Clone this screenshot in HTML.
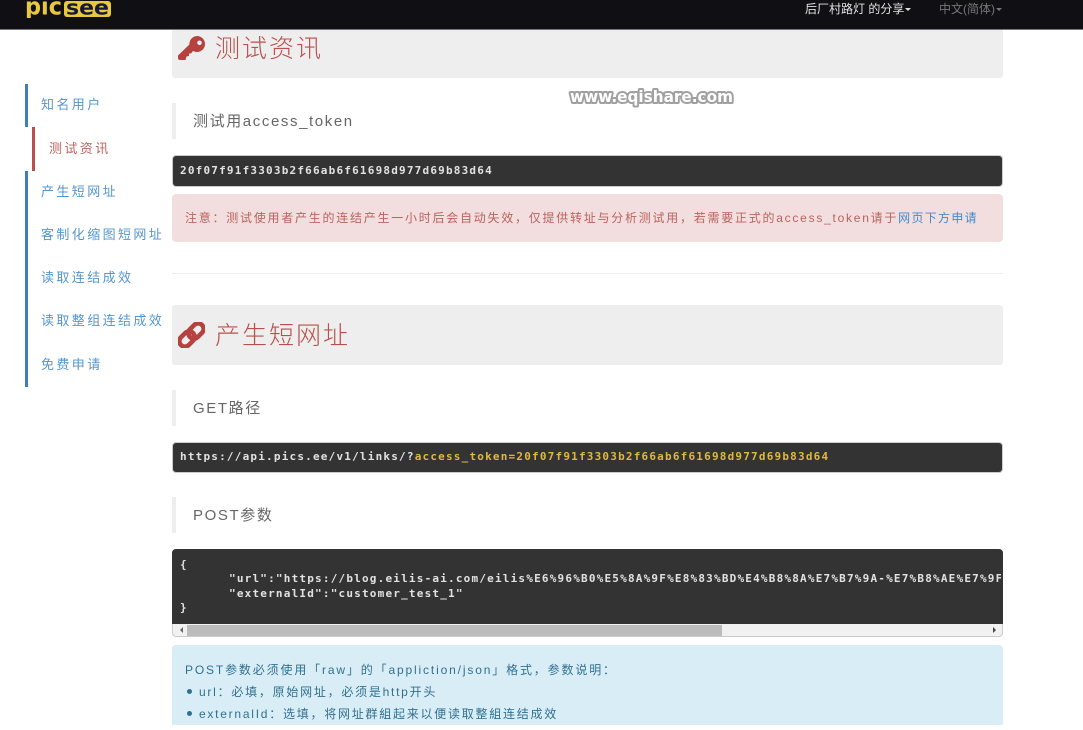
<!DOCTYPE html>
<html lang="zh">
<head>
<meta charset="utf-8">
<title>PicSee</title>
<style>
html,body{margin:0;padding:0;background:#fff}
body{position:relative;width:1083px;height:730px;overflow:hidden;font-family:"Liberation Sans","Noto Sans CJK SC",sans-serif}
.a{position:absolute;white-space:nowrap}
.nav{left:0;top:0;width:1083px;height:29px;background:#101014;border-bottom:1px solid #777}
.side{left:41px;font-size:13px;letter-spacing:2.4px;color:#428bca;line-height:20px;opacity:.9}
.bar{width:3px;background:#3f7fb5}
.band{left:172px;width:831px;background:#eee;border-radius:0 0 3px 3px}
.h{left:215px;font-size:25px;letter-spacing:2px;color:#b9504b;line-height:34px;font-weight:300}
.bq{left:172px;width:4px;height:36px;background:#eee}
.bt{left:193px;font-size:15px;letter-spacing:1.6px;color:#666;line-height:20px}
.pre{left:172px;width:829px;background:#333;border:1px solid #ccc;border-radius:4px}
.m{font-family:"DejaVu Sans Mono","Liberation Mono",monospace;font-size:11px;font-weight:700;letter-spacing:1.2px;color:#e2e2e2;line-height:14px}
.t{font-size:12px;letter-spacing:1.75px;line-height:18px}
</style>
</head>
<body>
<div class="a nav"></div>
<svg class="a" style="left:24px;top:0" width="90" height="18" viewBox="0 0 90 18">
<text x="1" y="14.5" font-family="DejaVu Sans" font-weight="700" font-size="24" fill="#e8c83f" textLength="37" lengthAdjust="spacingAndGlyphs">pic</text>
<rect x="40" y="1" width="47" height="16" rx="3" fill="#e8c83f"/>
<text x="42" y="14.5" font-family="DejaVu Sans" font-weight="700" font-size="20" fill="#16183a" textLength="43" lengthAdjust="spacingAndGlyphs">see</text>
</svg>
<div class="a" style="left:805px;top:1px;font-size:12px;line-height:16px;color:#e2e2e2">后厂村路灯 的分享</div>
<div class="a" style="left:905px;top:8px;border:3.5px solid transparent;border-top-color:#ddd;border-bottom:0"></div>
<div class="a" style="left:939px;top:1px;font-size:12px;line-height:16px;color:#777">中文(简体)</div>
<div class="a" style="left:996px;top:8px;border:3.5px solid transparent;border-top-color:#777;border-bottom:0"></div>

<div class="a bar" style="left:25px;top:84px;height:43px"></div>
<div class="a bar" style="left:32px;top:127px;height:44px;background:#b9504b"></div>
<div class="a bar" style="left:25px;top:171px;height:216px"></div>
<div class="a side" style="top:95px">知名用户</div>
<div class="a side" style="left:49px;top:139px;color:#b9504b">测试资讯</div>
<div class="a side" style="top:182px">产生短网址</div>
<div class="a side" style="top:225px">客制化缩图短网址</div>
<div class="a side" style="top:268px">读取连结成效</div>
<div class="a side" style="top:311px">读取整组连结成效</div>
<div class="a side" style="top:355px">免费申请</div>

<div class="a band" style="top:30px;height:48px"></div>
<svg class="a" style="left:178px;top:36px" width="27" height="25" viewBox="0 0 27 25"><path fill="#b5423f" fill-rule="evenodd" d="M19 0a8 8 0 0 1 0 16c-1.400 0-2.800-.4-4-1l-2 2.500h-2v2.500l-2.500.5-1 3.500H1.500L0 23v-3.500L11.400 8.500A8 8 0 0 1 19 0zM21.500 4.500a2.300 2.300 0 1 0 0 4.600 2.300 2.300 0 0 0 0-4.600z"/></svg>
<div class="a h" style="top:32px">测试资讯</div>

<div class="a bq" style="top:103px"></div>
<div class="a bt" style="top:112px">测试用access_token</div>

<div class="a pre" style="top:155px;height:30px"></div>
<div class="a m" style="left:180px;top:164px">20f07f91f3303b2f66ab6f61698d977d69b83d64</div>

<div class="a" style="left:172px;top:194px;width:831px;height:48px;background:#f2dede;border-radius:4px"></div>
<div class="a t" style="left:185px;top:209px;color:#b9635f">注意：测试使用者产生的连结产生一小时后会自动失效，仅提供转址与分析测试用，若需要正式的access_token请于<span style="color:#428bca;letter-spacing:1.3px">网页下方申请</span></div>

<div class="a" style="left:172px;top:273px;width:831px;height:1px;background:#eee"></div>

<div class="a band" style="top:305px;height:60px;border-radius:3px"></div>
<svg class="a" style="left:178px;top:322px" width="27" height="26" viewBox="0 0 27 26"><g fill="none" stroke="#b5423f" stroke-width="4.500"><rect x="-8.500" y="-5.500" width="17" height="11" rx="5.500" transform="translate(9 17) rotate(-45)"/><rect x="-8.500" y="-5.500" width="17" height="11" rx="5.500" transform="translate(18 9) rotate(-45)"/></g></svg>
<div class="a h" style="top:319px">产生短网址</div>

<div class="a bq" style="top:390px"></div>
<div class="a bt" style="top:399px">GET路径</div>

<div class="a pre" style="top:442px;height:29px"></div>
<div class="a m" style="left:180px;top:450px">https://api.pics.ee/v1/links/?<span style="color:#e0b93c">access_token=20f07f91f3303b2f66ab6f61698d977d69b83d64</span></div>

<div class="a bq" style="top:497px"></div>
<div class="a bt" style="top:506px">POST参数</div>

<div class="a" style="left:172px;top:549px;width:831px;height:88px;border-radius:4px;overflow:hidden;background:#f1f1f1;box-shadow:inset 0 0 0 1px #ccc">
  <div class="a" style="left:0;top:0;width:831px;height:75px;background:#333"></div>
  <div class="a m" style="left:8px;top:9px">{</div>
  <div class="a m" style="left:57px;top:23px;width:772px;overflow:hidden">"url":"https://blog.eilis-ai.com/eilis%E6%96%B0%E5%8A%9F%E8%83%BD%E4%B8%8A%E7%B7%9A-%E7%B8%AE%E7%9F%AD%E7%B6%B2%E5%9D%80</div>
  <div class="a m" style="left:57px;top:38px">"externalId":"customer_test_1"</div>
  <div class="a m" style="left:8px;top:52px">}</div>
  <div class="a" style="left:15px;top:76px;width:535px;height:11px;background:#bcbcbc"></div>
  <div class="a" style="left:8px;top:78px;border:3.5px solid transparent;border-right-color:#666;border-left:0"></div>
  <div class="a" style="left:821px;top:78px;border:3.5px solid transparent;border-left-color:#444;border-right:0"></div>
</div>

<div class="a" style="left:172px;top:645px;width:831px;height:80px;background:#d9edf7;border-radius:4px 4px 0 0"></div>
<div class="a t" style="left:185px;top:661px;color:#31708f;letter-spacing:1.85px">POST参数必须使用「raw」的「appliction/json」格式，参数说明：</div>
<div class="a" style="left:187px;top:689px;width:5px;height:5px;border-radius:50%;background:#31708f"></div>
<div class="a t" style="left:199px;top:683px;color:#31708f">url：必填，原始网址，必须是http开头</div>
<div class="a" style="left:187px;top:711px;width:5px;height:5px;border-radius:50%;background:#31708f"></div>
<div class="a t" style="left:199px;top:705px;color:#31708f">externalId：选填，将网址群組起来以便读取整組连结成效</div>

<svg class="a" style="left:566px;top:84px" width="172" height="26" viewBox="0 0 172 26"><text x="4" y="18" font-family="DejaVu Sans" font-weight="700" font-size="16" fill="#fff" stroke="#a0a0a0" stroke-width="4" paint-order="stroke" stroke-linejoin="round" textLength="163" lengthAdjust="spacingAndGlyphs">www.eqishare.com</text></svg>
</body>
</html>
